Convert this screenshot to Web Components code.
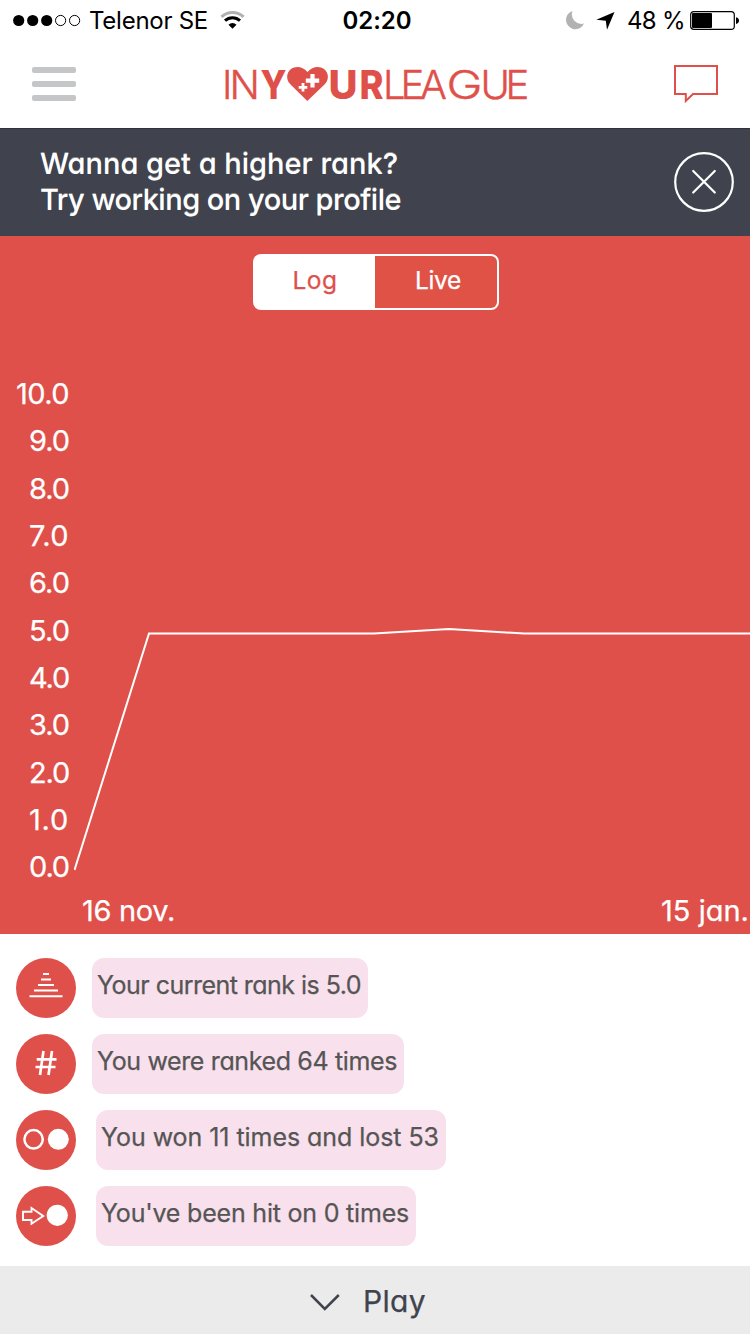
<!DOCTYPE html>
<html lang="en">
<head>
<meta charset="utf-8">
<title>In Your League</title>
<style>
    body {
        margin: 0;
        background: #fff;
        font-family: Inter, "Liberation Sans", sans-serif;
        --red: #e0504a;
        --dark: #40434e;
    }
</style>
</head>
<body>
<league-app></league-app>

<script>
// Text that spreads its letters to fill a given width
class FitText extends HTMLElement {
    connectedCallback() {
        this.attachShadow({ mode: 'open' });
        this.shadowRoot.innerHTML = `
            <style>
                :host {
                    display: block;
                    white-space: nowrap;
                    font-kerning: normal;
                    font-feature-settings: "cv11", "ss03";
                }
                span { display: inline-block; }
            </style>
            <span><slot></slot></span>
        `;
        const span = this.shadowRoot.querySelector('span');
        const width = Number(this.getAttribute('width'));
        const count = this.textContent.length;
        const spacing = (width - span.getBoundingClientRect().width) / count;
        span.style.letterSpacing = spacing + 'px';
        this.style.width = width + 'px';
    }
}

class StatusBar extends HTMLElement {
    connectedCallback() {
        this.attachShadow({ mode: 'open' });
        this.shadowRoot.innerHTML = `
            <style>
                :host {
                    display: grid;
                    grid-template-columns: 1fr auto 1fr;
                    height: 40px;
                    line-height: 41px;
                    font-size: 24px;
                    color: #000;
                }
                div { display: flex; }
                .left { padding-left: 12px; }
                .right { justify-content: flex-end; padding-right: 10px; }
                .time { font-weight: 600; padding-left: 4px; }
                .carrier { margin: 0 12px 0 8px; }
                .percent { margin: 0 5px 0 12px; }
                svg { display: block; flex: none; }
            </style>
            <div class="left">
                <svg width="69" height="40" viewBox="0 0 69 40">
                    <circle cx="6.7" cy="20.5" r="5.6"/>
                    <circle cx="20.7" cy="20.5" r="5.6"/>
                    <circle cx="34.7" cy="20.5" r="5.6"/>
                    <g fill="none" stroke="#000">
                        <circle cx="48.6" cy="20.5" r="5.1"/>
                        <circle cx="62.6" cy="20.5" r="5.1"/>
                    </g>
                </svg>
                <fit-text class="carrier" width="119">Telenor SE</fit-text>
                <svg width="26" height="40" viewBox="0 0 26 40">
                    <path d="M12.5 28.7 8.5 24.7A5.8 5.8 0 0 1 16.5 24.7Z"/>
                    <path d="M5 20.7A11 11 0 0 1 20 20.7" fill="none" stroke="#000" stroke-width="3"/>
                    <path d="M1.4 16.8A16.5 16.5 0 0 1 23.6 16.8" fill="none" stroke="#b2b2b2" stroke-width="3"/>
                </svg>
            </div>
            <fit-text class="time" width="69">02:20</fit-text>
            <div class="right">
                <svg width="49" height="40" viewBox="0 0 49 40">
                    <path d="M6.500 11A9.300 9.300 0 1 0 17.900 23.500A9.500 9.500 0 0 1 6.500 11Z" fill="#b2b2b2"/>
                    <path d="M48.500 12 30.300 19.700 39.800 20.700 41 29.800Z"/>
                </svg>
                <fit-text class="percent" width="58">48 %</fit-text>
                <svg width="50" height="40" viewBox="0 0 50 40">
                    <rect x=".7" y="11.6" width="43.6" height="17.8" rx="3.2" fill="none" stroke="#000" stroke-width="1.2"/>
                    <rect x="2" y="13" width="20" height="15" rx="1"/>
                    <path d="M46 17.2Q49 17.8 49 20.6T46 24Z"/>
                </svg>
            </div>
        `;
    }
}

class LeagueLogo extends HTMLElement {
    connectedCallback() {
        this.attachShadow({ mode: 'open' });
        this.shadowRoot.innerHTML = `
            <style>
                :host { display: block; }
                svg { display: block; overflow: visible; }
                text {
                    font-size: 40px;
                    font-weight: 300;
                    fill: var(--red);
                    stroke: var(--red);
                    stroke-width: .4px;
                }
                .bold { font-weight: 800; stroke: none; }
            </style>
            <svg width="304" height="60" viewBox="0 0 304 60">
                <text x="-1 6.500" y="44.5">IN</text>
                <text class="bold" x="37.5" y="44.5" textLength="26" lengthAdjust="spacingAndGlyphs">Y</text>
                <path fill="var(--red)" d="M84.3 47 67.5 30.5C61.5 24.5 64 15.5 71 13.4Q78.500 11.400 84.500 18Q90.500 11.400 98 13.400C105 15.500 107.500 24.500 101.500 30.500Z"/>
                <g stroke="#fff" fill="none">
                    <path stroke-width="4.200" d="M89.500 20v13.400M82.800 26.700h13.400"/>
                    <path stroke-width="2.800" d="M80 29v8.600M75.700 33.300h8.600"/>
                </g>
                <text class="bold" y="44.5"><tspan x="105.500">U</tspan><tspan x="136.500" textLength="24" lengthAdjust="spacingAndGlyphs">R</tspan></text>
                <text y="44.5"><tspan x="160 177.500 197">LEA</tspan><tspan x="223.500" textLength="36" lengthAdjust="spacingAndGlyphs">G</tspan><tspan x="257.500 282.500">UE</tspan></text>
            </svg>
        `;
    }
}

class TitleBar extends HTMLElement {
    connectedCallback() {
        this.attachShadow({ mode: 'open' });
        this.shadowRoot.innerHTML = `
            <style>
                :host {
                    display: flex;
                    justify-content: space-between;
                    height: 88px;
                    padding: 0 30px 0 32px;
                    align-items: center;
                    box-sizing: border-box;
                }
                svg { display: block; }
                .menu {
                    width: 44px;
                    display: grid;
                    gap: 7.500px;
                }
                .menu i {
                    height: 6.500px;
                    border-radius: 2px;
                    background: #c5c6c8;
                }
            </style>
            <div class="menu"><i></i><i></i><i></i></div>
            <league-logo></league-logo>
            <svg width="46" height="40" viewBox="0 0 46 40" fill="none" stroke="var(--red)" stroke-width="2">
                <path d="M1 2H43V30H19L11.800 37V30H1Z"/>
            </svg>
        `;
    }
}

class TipBanner extends HTMLElement {
    connectedCallback() {
        this.attachShadow({ mode: 'open' });
        this.shadowRoot.innerHTML = `
            <style>
                :host {
                    display: flex;
                    justify-content: space-between;
                    height: 108px;
                    box-sizing: border-box;
                    padding: 17px 15px 0 40px;
                    background: var(--dark);
                    border-top: 1px solid #30323a;
                    color: #fff;
                    font-size: 29px;
                    line-height: 36px;
                    font-weight: 500;
                    text-shadow: 0 -1px 0 rgba(190, 190, 180, .6);
                }
                svg { display: block; margin-top: 5px; }
            </style>
            <div><slot></slot></div>
            <svg width="62" height="62" viewBox="0 0 62 62" fill="none" stroke="#fff" stroke-width="2.200" stroke-linecap="round">
                <circle cx="31" cy="31" r="28.800"/>
                <path d="M20.200 20 41.800 41.500M41.800 20 20.200 41.500"/>
            </svg>
        `;
    }
}

class ModeSwitch extends HTMLElement {
    connectedCallback() {
        this.attachShadow({ mode: 'open' });
        this.shadowRoot.innerHTML = `
            <style>
                :host {
                    display: flex;
                    width: 246px;
                    height: 56px;
                    box-sizing: border-box;
                    padding: 2px;
                    border-radius: 8px;
                    background: #fff;
                    font-size: 24.500px;
                    line-height: 49px;
                }
                div {
                    flex: 1;
                    display: flex;
                    justify-content: center;
                    border-radius: 0 6px 6px 0;
                    background: #e05246;
                    color: #fff;
                    padding-left: 4px;
                }
                .on {
                    flex: 0 0 120px;
                    padding: 0;
                    background: none;
                    color: var(--red);
                }
            </style>
            <div class="on"><fit-text width="45">Log</fit-text></div>
            <div><fit-text width="46">Live</fit-text></div>
        `;
    }
}

class RankChart extends HTMLElement {
    connectedCallback() {
        const labels = [];
        for (let n = 10; n >= 0; n--) {
            labels.push(`<fit-text width="${n === 10 ? 53 : 40}">${n.toFixed(1)}</fit-text>`);
        }
        this.attachShadow({ mode: 'open' });
        this.shadowRoot.innerHTML = `
            <style>
                :host {
                    display: block;
                    height: 698px;
                    box-sizing: border-box;
                    padding-top: 18px;
                    background: var(--red);
                    color: #fff;
                    font-size: 29px;
                    -webkit-text-stroke: .25px;
                }
                mode-switch { margin: 0 auto 60px 253px; }
                .plot { display: flex; height: 521px; }
                .axis {
                    width: 74px;
                    display: flex;
                    flex-direction: column;
                    align-items: flex-end;
                    padding-right: 5px;
                    box-sizing: border-box;
                    line-height: 47.350px;
                }
                .dates {
                    display: flex;
                    justify-content: space-between;
                    padding: 0 1px 0 82px;
                    line-height: 39px;
                }
                svg { display: block; }
            </style>
            <mode-switch></mode-switch>
            <div class="plot">
                <div class="axis">${labels.join('')}</div>
                <svg width="676" height="521" viewBox="0 0 676 521">
                    <path d="M.500 500 75 263.500H300L375 259 450 263.500H676" fill="none" stroke="#fff" stroke-width="2"/>
                </svg>
            </div>
            <div class="dates">
                <fit-text width="93">16 nov.</fit-text>
                <fit-text width="88">15 jan.</fit-text>
            </div>
        `;
    }
}

const ICONS = {
    rank: `<path d="M27 16h6M25 21.500h10M22 27h16M18 32.600h24M13.500 38.300h33" stroke-width="2"/>`,
    count: `<path d="M27.500 17 24 41M36 17 32.500 41M20.700 25.300H40.500M19.500 33H39.500" stroke-width="2.700"/>`,
    won: `<circle cx="17.600" cy="29.300" r="9.200" stroke-width="2.500"/><circle cx="42.300" cy="29.300" r="10.500" fill="#fff" stroke="none"/>`,
    hit: `<path d="M7 25.800H15.500V22L27.200 30 15.500 37.700V34H7Z" stroke-width="1.900"/><circle cx="41.300" cy="29.300" r="10.600" fill="#fff" stroke="none"/>`
};

class StatRow extends HTMLElement {
    connectedCallback() {
        this.attachShadow({ mode: 'open' });
        this.shadowRoot.innerHTML = `
            <style>
                :host { display: flex; height: 60px; gap: 16px; }
                :host([wide]) { gap: 20px; }
                svg {
                    display: block;
                    border-radius: 50%;
                    background: var(--red);
                }
                .bubble {
                    padding: 0 7px 0 5px;
                    border-radius: 12px;
                    background: #f9e0ed;
                    color: #555;
                    font-size: 25px;
                    -webkit-text-stroke: .25px;
                    line-height: 55px;
                }
            </style>
            <svg width="60" height="60" viewBox="0 0 60 60" fill="none" stroke="#fff">${ICONS[this.getAttribute('icon')]}</svg>
            <div class="bubble"><slot></slot></div>
        `;
    }
}

class PlayBar extends HTMLElement {
    connectedCallback() {
        this.attachShadow({ mode: 'open' });
        this.shadowRoot.innerHTML = `
            <style>
                :host {
                    display: flex;
                    height: 68px;
                    padding-left: 310px;
                    background: #ebebeb;
                    color: var(--dark);
                    font-size: 30px;
                    -webkit-text-stroke: .25px;
                    line-height: 70px;
                }
                svg { display: block; margin-right: 22px; }
            </style>
            <svg width="31" height="68" viewBox="0 0 31 68" fill="none" stroke="var(--dark)" stroke-width="2.500">
                <path d="M1 29 14.800 43 28.800 29"/>
            </svg>
            <fit-text width="63">Play</fit-text>
        `;
    }
}

class LeagueApp extends HTMLElement {
    connectedCallback() {
        this.attachShadow({ mode: 'open' });
        this.shadowRoot.innerHTML = `
            <style>
                :host {
                    display: flex;
                    flex-direction: column;
                    width: 750px;
                    height: 1334px;
                    overflow: hidden;
                }
                .stats {
                    flex: 1;
                    display: flex;
                    flex-direction: column;
                    gap: 16px;
                    padding: 24px 16px 0;
                }
            </style>
            <status-bar></status-bar>
            <title-bar></title-bar>
            <tip-banner>
                <fit-text width="358">Wanna get a higher rank?</fit-text>
                <fit-text width="361">Try working on your profile</fit-text>
            </tip-banner>
            <rank-chart></rank-chart>
            <div class="stats">
                <stat-row icon="rank"><fit-text width="264">Your current rank is 5.0</fit-text></stat-row>
                <stat-row icon="count"><fit-text width="300">You were ranked 64 times</fit-text></stat-row>
                <stat-row icon="won" wide><fit-text width="338">You won 11 times and lost 53</fit-text></stat-row>
                <stat-row icon="hit" wide><fit-text width="308">You've been hit on 0 times</fit-text></stat-row>
            </div>
            <play-bar></play-bar>
        `;
    }
}

customElements.define('fit-text', FitText);
customElements.define('status-bar', StatusBar);
customElements.define('league-logo', LeagueLogo);
customElements.define('title-bar', TitleBar);
customElements.define('tip-banner', TipBanner);
customElements.define('mode-switch', ModeSwitch);
customElements.define('rank-chart', RankChart);
customElements.define('stat-row', StatRow);
customElements.define('play-bar', PlayBar);
customElements.define('league-app', LeagueApp);
</script>
</body>
</html>
